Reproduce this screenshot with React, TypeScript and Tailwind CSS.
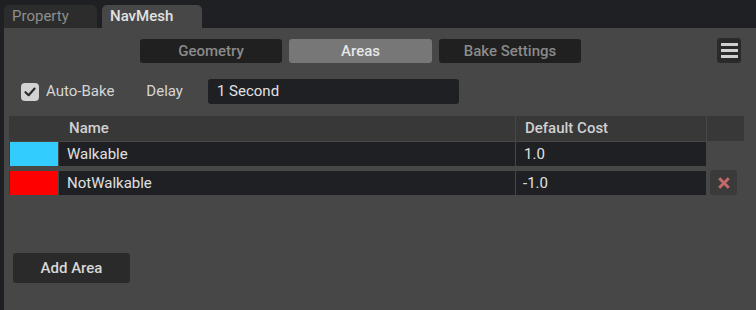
import React from "react";

const font = { fontFamily: "Roboto, 'Noto Sans', sans-serif" };

export default function App() {
  return (
    <div className="w-[756px] h-[310px] bg-[#1f2023] flex flex-col overflow-hidden" style={font}>
      {/* tab bar */}
      <div className="h-[28px] flex items-end pl-[4px] gap-[5px]">
        <div className="w-[93px] h-[23px] rounded-t-[5px] bg-[#2c2c2c] text-[#8e8e8e] text-[15px] pl-[8px] flex items-center">Property</div>
        <div className="w-[100px] h-[23px] rounded-t-[5px] bg-[#474747] text-[#e2e2e2] text-[15px] font-medium pl-[8px] flex items-center">NavMesh</div>
      </div>
      {/* panel */}
      <div className="flex-1 ml-[4px] bg-[#474747] flex flex-col">
        {/* segment row */}
        <div className="flex items-center mt-[9px] h-[26px] pr-[15px]">
          <div className="flex gap-[7px] ml-[136px] mt-[2px]">
            <div className="w-[142px] h-[24px] rounded-[3px] bg-[#202020] text-[#8a8a8a] text-[15px] font-medium flex items-center justify-center">Geometry</div>
            <div className="w-[143px] h-[24px] rounded-[3px] bg-[#777777] text-[#e6e6e6] text-[15px] font-medium flex items-center justify-center">Areas</div>
            <div className="w-[142px] h-[24px] rounded-[3px] bg-[#202020] text-[#8a8a8a] text-[15px] font-medium flex items-center justify-center">Bake Settings</div>
          </div>
          <div className="ml-auto w-[24px] h-[25px] rounded-[3px] bg-[#2a2a2a] flex flex-col items-center justify-center gap-[3px]">
            <div className="w-[17px] h-[3px] bg-[#d0d0d0]" />
            <div className="w-[17px] h-[3px] bg-[#d0d0d0]" />
            <div className="w-[17px] h-[3px] bg-[#d0d0d0]" />
          </div>
        </div>
        {/* auto bake row */}
        <div className="flex items-center mt-[16px] h-[25px]">
          <div className="ml-[17px] w-[18px] h-[18px] rounded-[4px] bg-[#d2d2d2] flex items-center justify-center">
            <svg width="14" height="14" viewBox="0 0 14 14">
              <path d="M2.5 7.2 L5.6 10.2 L11.6 3.6" fill="none" stroke="#2a2a2a" strokeWidth="2.2" strokeLinecap="round" strokeLinejoin="round" />
            </svg>
          </div>
          <span className="ml-[7px] text-[15px] text-[#d6d6d6]">Auto-Bake</span>
          <span className="ml-[32px] text-[15px] text-[#d6d6d6]">Delay</span>
          <div className="ml-[25px] w-[251px] h-[25px] rounded-[3px] bg-[#1f2024] text-[15px] text-[#e0e0e0] pl-[9px] flex items-center">1 Second</div>
        </div>
        {/* table */}
        <div className="ml-[5px] mt-[12px] flex flex-col">
          <div className="flex h-[25px]">
            <div className="w-[506px] h-[25px] bg-[#383838] text-[15px] font-medium text-[#d0d0d0] pl-[60px] flex items-center">Name</div>
            <div className="ml-[1px] w-[190px] h-[25px] bg-[#383838] text-[15px] font-medium text-[#d0d0d0] pl-[9px] flex items-center">Default Cost</div>
            <div className="ml-[1px] w-[37px] h-[25px] bg-[#383838]" />
          </div>
          <div className="flex h-[25px] mt-[1px]">
            <div className="w-[49px] h-[24px] bg-[#3a3a3a] flex items-stretch">
              <div className="ml-[1px] w-[48px] bg-[#33ccff]" />
            </div>
            <div className="ml-[1px] w-[456px] h-[24px] bg-[#1f2024] text-[15px] text-[#e0e0e0] pl-[8px] flex items-center">Walkable</div>
            <div className="ml-[1px] w-[190px] h-[24px] bg-[#1f2024] text-[15px] text-[#e0e0e0] pl-[8px] flex items-center">1.0</div>
          </div>
          <div className="flex h-[25px] mt-[4px] items-start">
            <div className="w-[49px] h-[24px] bg-[#3a3a3a] flex items-stretch">
              <div className="ml-[1px] w-[48px] bg-[#ff0000]" />
            </div>
            <div className="ml-[1px] w-[456px] h-[24px] bg-[#1f2024] text-[15px] text-[#e0e0e0] pl-[8px] flex items-center">NotWalkable</div>
            <div className="ml-[1px] w-[190px] h-[24px] bg-[#1f2024] text-[15px] text-[#e0e0e0] pl-[7px] flex items-center">-1.0</div>
            <div className="ml-[4px] -mt-[1px] w-[27px] h-[25px] rounded-[3px] bg-[#3a3a3a] flex items-center justify-center">
              <svg width="12" height="12" viewBox="0 0 12 12">
                <path d="M2.3 2.3 L9.7 9.7 M9.7 2.3 L2.3 9.7" stroke="#c26a6a" strokeWidth="3" strokeLinecap="square" />
              </svg>
            </div>
          </div>
        </div>
        {/* add area */}
        <div className="ml-[9px] mt-[57px] w-[117px] h-[30px] rounded-[3px] bg-[#2a2a2a] text-[15px] font-medium text-[#d8d8d8] flex items-center justify-center">Add Area</div>
      </div>
    </div>
  );
}
